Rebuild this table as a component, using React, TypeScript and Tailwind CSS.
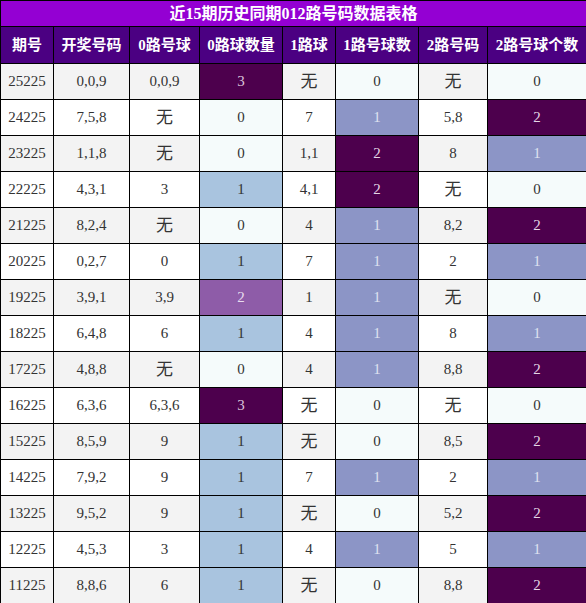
const headers = ["期号", "开奖号码", "0路号球", "0路球数量", "1路球", "1路号球数", "2路号码", "2路号球个数"];
const widths = ["w-[53px]", "w-[76px]", "w-[70px]", "w-[83px]", "w-[53px]", "w-[83px]", "w-[69px]", "w-[99px]"];

const rows: string[][] = [
  ["25225", "0,0,9", "0,0,9", "3", "无", "0", "无", "0"],
  ["24225", "7,5,8", "无", "0", "7", "1", "5,8", "2"],
  ["23225", "1,1,8", "无", "0", "1,1", "2", "8", "1"],
  ["22225", "4,3,1", "3", "1", "4,1", "2", "无", "0"],
  ["21225", "8,2,4", "无", "0", "4", "1", "8,2", "2"],
  ["20225", "0,2,7", "0", "1", "7", "1", "2", "1"],
  ["19225", "3,9,1", "3,9", "2", "1", "1", "无", "0"],
  ["18225", "6,4,8", "6", "1", "4", "1", "8", "1"],
  ["17225", "4,8,8", "无", "0", "4", "1", "8,8", "2"],
  ["16225", "6,3,6", "6,3,6", "3", "无", "0", "无", "0"],
  ["15225", "8,5,9", "9", "1", "无", "0", "8,5", "2"],
  ["14225", "7,9,2", "9", "1", "7", "1", "2", "1"],
  ["13225", "9,5,2", "9", "1", "无", "0", "5,2", "2"],
  ["12225", "4,5,3", "3", "1", "4", "1", "5", "1"],
  ["11225", "8,8,6", "6", "1", "无", "0", "8,8", "2"],
];

// colour for the count columns
function countCls(col: number, v: string) {
  if (v === "0") return "bg-[#f5fbfb] text-[#333]";
  if (v === "3") return "bg-[#4d004d] text-[#dcc4dc]";
  if (col === 3) {
    if (v === "1") return "bg-[#a9c4df] text-[#333]";
    return "bg-[#8e5ca8] text-[#e8dcef]";
  }
  if (v === "1") return "bg-[#8c95c6] text-[#dfe2f0]";
  return "bg-[#4d004d] text-[#e6d6e6]";
}

export default function App() {
  return (
    <div
      className="w-[586px] h-[603px] bg-white overflow-hidden"
      style={{ fontFamily: '"Liberation Serif", "Noto Sans CJK SC", serif' }}
    >
      <table className="w-[586px] table-fixed border-collapse border border-black">
        <colgroup>
          {widths.map((w, i) => (
            <col key={i} className={w} />
          ))}
        </colgroup>
        <thead>
          <tr className="h-[26px]">
            <th
              colSpan={8}
              className="bg-[#9400d3] text-white text-[16px] font-bold border border-black p-0 leading-none"
            >
              近15期历史同期012路号码数据表格
            </th>
          </tr>
          <tr className="h-[37px]">
            {headers.map((h) => (
              <th
                key={h}
                className="bg-[#4b0082] text-white text-[15px] font-bold border border-black p-0"
              >
                {h}
              </th>
            ))}
          </tr>
        </thead>
        <tbody>
          {rows.map((r, ri) => (
            <tr key={r[0]} className={`h-[36px] ${ri % 2 === 0 ? "bg-[#f3f3f3]" : "bg-white"}`}>
              {r.map((c, ci) => {
                const isCount = ci === 3 || ci === 5 || ci === 7;
                const isWu = c === "无";
                return (
                  <td
                    key={ci}
                    className={`border border-black p-0 text-center ${
                      isCount ? countCls(ci, c) : "text-[#333]"
                    } ${isWu ? "text-[17px] text-[#111]" : "text-[15px]"}`}
                  >
                    {c}
                  </td>
                );
              })}
            </tr>
          ))}
        </tbody>
      </table>
    </div>
  );
}
